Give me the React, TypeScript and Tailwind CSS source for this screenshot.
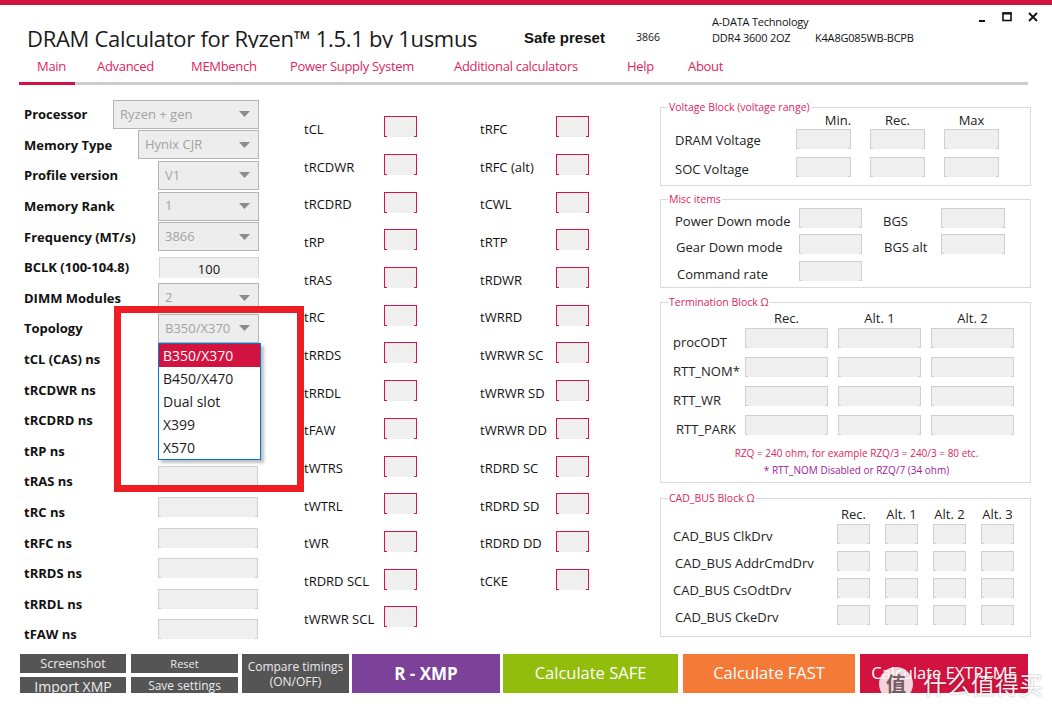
import React from "react";

// small WPF-style textbox: three sides drawn, bottom only has corner ticks
function Box({ className, red }: { className: string; red?: boolean }) {
  const line = red ? "border-[#d6144a]" : "border-[#cfcfcf]";
  const tick = red ? "bg-[#d6144a]" : "bg-[#cfcfcf]";
  return (
    <div className={`${className} ${line} flex shrink-0 flex-col border-x border-t bg-[#efefef]`}>
      <div className="flex-1" />
      <div className="flex h-px justify-between">
        <span className={`w-[2px] ${tick}`} />
        <span className={`w-[2px] ${tick}`} />
      </div>
    </div>
  );
}

function Combo({ className, value }: { className: string; value: string }) {
  return (
    <div
      className={`${className} flex h-[29px] shrink-0 items-center border border-[#b4b4b4] bg-[#ededed] pl-[6px] pr-[8px] text-[13px] text-[#a3a3a3]`}
    >
      <span className="flex-1">{value}</span>
      <svg width="11" height="6" viewBox="0 0 11 6" aria-hidden>
        <path d="M0 0h11L5.5 6z" fill="#8c8c8c" />
      </svg>
    </div>
  );
}

const leftRows: { label: string; kind: "combo" | "box" | "bclk"; value?: string; w?: string }[] = [
  { label: "Processor", kind: "combo", value: "Ryzen + gen", w: "w-[146px]" },
  { label: "Memory Type", kind: "combo", value: "Hynix CJR", w: "w-[121px]" },
  { label: "Profile version", kind: "combo", value: "V1", w: "w-[101px]" },
  { label: "Memory Rank", kind: "combo", value: "1", w: "w-[101px]" },
  { label: "Frequency (MT/s)", kind: "combo", value: "3866", w: "w-[101px]" },
  { label: "BCLK (100-104.8)", kind: "bclk" },
  { label: "DIMM Modules", kind: "combo", value: "2", w: "w-[101px]" },
  { label: "Topology", kind: "combo", value: "B350/X370", w: "w-[101px]" },
  { label: "tCL (CAS) ns", kind: "box" },
  { label: "tRCDWR ns", kind: "box" },
  { label: "tRCDRD ns", kind: "box" },
  { label: "tRP ns", kind: "box" },
  { label: "tRAS ns", kind: "box" },
  { label: "tRC ns", kind: "box" },
  { label: "tRFC ns", kind: "box" },
  { label: "tRRDS ns", kind: "box" },
  { label: "tRRDL ns", kind: "box" },
  { label: "tFAW ns", kind: "box" },
];

const timingsA = [
  "tCL", "tRCDWR", "tRCDRD", "tRP", "tRAS", "tRC", "tRRDS",
  "tRRDL", "tFAW", "tWTRS", "tWTRL", "tWR", "tRDRD SCL", "tWRWR SCL",
];
const timingsB = [
  "tRFC", "tRFC (alt)", "tCWL", "tRTP", "tRDWR", "tWRRD", "tWRWR SC",
  "tWRWR SD", "tWRWR DD", "tRDRD SC", "tRDRD SD", "tRDRD DD", "tCKE",
];

const tabs = [
  { name: "Main", w: "w-[60px]" },
  { name: "Advanced", w: "w-[94px]" },
  { name: "MEMbench", w: "w-[99px]" },
  { name: "Power Supply System", w: "w-[164px]" },
  { name: "Additional calculators", w: "w-[173px]" },
  { name: "Help", w: "w-[61px]" },
  { name: "About", w: "w-[60px]" },
];

function Legend({ children }: { children: React.ReactNode }) {
  return (
    <legend className="ml-[7px] px-[1px] text-[10.5px] leading-[14px] text-[#e0245e]">
      {children}
    </legend>
  );
}

export default function App() {
  return (
    <div className="relative h-[712px] w-[1052px] overflow-hidden bg-white font-['Open_Sans',sans-serif] text-[#111]">
      <div className="h-[5px] bg-[#d2123f]" />

      {/* title bar */}
      <div className="flex h-[52px]">
        <div className="w-[524px] shrink-0 pl-[27px]">
          <div className="mt-[17px] h-[26px] overflow-hidden whitespace-nowrap text-[22px] leading-[32px] tracking-[-0.3px] text-[#1a1a1a]">
            DRAM Calculator for Ryzen™ 1.5.1 by 1usmus
          </div>
        </div>
        <div className="w-[112px] shrink-0 pt-[24px] font-['Liberation_Sans',sans-serif] text-[15px] font-bold leading-[18px]">
          Safe preset
        </div>
        <div className="w-[76px] shrink-0 pt-[25px] text-[10.5px] leading-[14px]">3866</div>
        <div className="flex shrink-0 flex-col pt-[9px] text-[11px] leading-[16px] tracking-[-0.2px]">
          <div>A-DATA Technology</div>
          <div className="flex">
            <span className="w-[103px]">DDR4 3600 2OZ</span>
            <span>K4A8G085WB-BCPB</span>
          </div>
        </div>
        <div className="ml-auto flex items-start gap-[16px] pr-[14px] pt-[7px]">
          <svg width="7" height="10" viewBox="0 0 7 10" className="mt-[1px]" aria-hidden>
            <rect x="0" y="7" width="6" height="2" fill="#111" />
          </svg>
          <svg width="10" height="10" viewBox="0 0 10 10" aria-hidden>
            <rect x="1" y="1" width="8" height="7.5" fill="none" stroke="#111" strokeWidth="1.6" />
            <rect x="0.5" y="0.5" width="9" height="2" fill="#111" />
          </svg>
          <svg width="10" height="10" viewBox="0 0 10 10" aria-hidden>
            <path d="M1 1l8 8M9 1l-8 8" stroke="#111" strokeWidth="1.8" />
          </svg>
        </div>
      </div>

      {/* tabs */}
      <div className="flex h-[25px] pl-[37px] text-[13px] leading-[18px] tracking-[-0.3px] text-[#e0245e]">
        {tabs.map((t) => (
          <div key={t.name} className={`${t.w} shrink-0 whitespace-nowrap`}>
            {t.name}
          </div>
        ))}
      </div>
      <div className="ml-[19px] flex h-[3px] w-[1009px] bg-[#cccccc]">
        <div className="w-[56px] bg-[#d2123f]" />
      </div>

      {/* main area */}
      <div className="flex h-[569px]">
        {/* left column */}
        <div className="w-[300px] shrink-0 pl-[24px] pt-[14px]">
          <div className="flex w-[235px] flex-col">
            {leftRows.map((r) => (
              <div key={r.label} className="flex h-[30.6px] items-center justify-between">
                <span className="whitespace-nowrap text-[13px] font-bold leading-[18px]">{r.label}</span>
                {r.kind === "combo" && <Combo className={r.w!} value={r.value!} />}
                {r.kind === "bclk" && (
                  <div className="flex h-[21px] w-[100px] items-end justify-center border-x border-t border-[#d4d4d4] bg-[#efefef] text-[13px] leading-[18px]">
                    100
                  </div>
                )}
                {r.kind === "box" && <Box className="mb-[10px] mr-px h-[20px] w-[100px]" />}
              </div>
            ))}
          </div>
        </div>

        {/* timing columns */}
        <div className="flex w-[360px] shrink-0 pl-[4px] pt-[23px]">
          <div className="flex w-[176px] flex-col">
            {timingsA.map((t) => (
              <div key={t} className="flex h-[37.7px] items-center">
                <span className="w-[80px] whitespace-nowrap pt-[4px] text-[13px] leading-[18px]">{t}</span>
                <Box red className="h-[21px] w-[33px]" />
              </div>
            ))}
          </div>
          <div className="flex flex-col">
            {timingsB.map((t) => (
              <div key={t} className="flex h-[37.7px] items-center">
                <span className="w-[76px] whitespace-nowrap pt-[4px] text-[13px] leading-[18px]">{t}</span>
                <Box red className="h-[21px] w-[33px]" />
              </div>
            ))}
          </div>
        </div>

        {/* right blocks */}
        <div className="flex w-[371px] shrink-0 flex-col pt-[15px] text-[13px] leading-[18px] text-[#222]">
          <fieldset className="border border-[#dadada] pb-[8px]">
            <Legend>Voltage Block (voltage range)</Legend>
            <div className="pl-[14px]">
              <div className="-mt-[1px] flex h-[14px] items-center pl-[121px] leading-[14px]">
                <span className="w-[74px] pl-[10px] text-center">Min.</span>
                <span className="w-[74px] pr-[19px] text-center">Rec.</span>
                <span className="w-[74px] pr-[19px] text-center">Max</span>
              </div>
              <div className="mt-[2px] flex h-[20px] items-center">
                <span className="w-[121px] pt-[1px]">DRAM Voltage</span>
                <div className="flex gap-[19px]">
                  <Box className="h-[20px] w-[55px]" />
                  <Box className="h-[20px] w-[55px]" />
                  <Box className="h-[20px] w-[55px]" />
                </div>
              </div>
              <div className="mt-[8px] flex h-[20px] items-center">
                <span className="w-[121px] pt-[4px]">SOC Voltage</span>
                <div className="flex gap-[19px]">
                  <Box className="h-[20px] w-[55px]" />
                  <Box className="h-[20px] w-[55px]" />
                  <Box className="h-[20px] w-[55px]" />
                </div>
              </div>
            </div>
          </fieldset>

          <fieldset className="mt-[6px] border border-[#dadada] pb-[6px]">
            <Legend>Misc items</Legend>
            <div className="pl-[14px]">
              <div className="mt-[2px] flex h-[20px] items-center">
                <span className="w-[124px] pt-[6px]">Power Down mode</span>
                <Box className="h-[20px] w-[63px]" />
                <span className="ml-[21px] w-[58px] pt-[6px]">BGS</span>
                <Box className="h-[20px] w-[64px]" />
              </div>
              <div className="mt-[6px] flex h-[20px] items-center">
                <span className="w-[124px] pl-px pt-[6px]">Gear Down mode</span>
                <Box className="h-[20px] w-[63px]" />
                <span className="ml-[21px] w-[58px] pl-px pt-[6px]">BGS alt</span>
                <Box className="h-[20px] w-[64px]" />
              </div>
              <div className="mt-[7px] flex h-[20px] items-center">
                <span className="w-[124px] pl-[2px] pt-[5px]">Command rate</span>
                <Box className="h-[20px] w-[63px]" />
              </div>
            </div>
          </fieldset>

          <fieldset className="mt-[7px] border border-[#dadada] pb-[5px]">
            <Legend>Termination Block Ω</Legend>
            <div className="pl-[12px]">
              <div className="mt-[2px] flex h-[14px] items-center pl-[72px] leading-[14px]">
                <span className="w-[93px] pr-[10px] text-center">Rec.</span>
                <span className="w-[93px] pr-[10px] text-center">Alt. 1</span>
                <span className="w-[93px] pr-[10px] text-center">Alt. 2</span>
              </div>
              <div className="mt-[3px] flex flex-col gap-[9px]">
                {["procODT", "RTT_NOM*", "RTT_WR", "RTT_PARK"].map((l, i) => (
                  <div key={l} className="flex h-[20px] items-center">
                    <span className={`w-[72px] whitespace-nowrap pt-[7px] ${i === 3 ? "pl-[3px]" : ""}`}>{l}</span>
                    <div className="flex gap-[10px]">
                      <Box className="h-[20px] w-[83px]" />
                      <Box className="h-[20px] w-[83px]" />
                      <Box className="h-[20px] w-[83px]" />
                    </div>
                  </div>
                ))}
              </div>
              <div className="mt-[11px] h-[14px] pl-[10px] text-center text-[10px] leading-[14px] text-[#e0245e]">
                RZQ = 240 ohm, for example RZQ/3 = 240/3 = 80 etc.
              </div>
              <div className="mt-[3px] h-[14px] pl-[10px] text-center text-[10px] leading-[14px] text-[#a2189c]">
                * RTT_NOM Disabled or RZQ/7 (34 ohm)
              </div>
            </div>
          </fieldset>

          <fieldset className="mt-[8px] border border-[#dadada] pb-[11px]">
            <Legend>CAD_BUS Block Ω</Legend>
            <div className="pl-[12px]">
              <div className="mt-[2px] flex h-[14px] items-center pl-[164px] leading-[14px]">
                <span className="w-[48px] pr-[15px] text-center">Rec.</span>
                <span className="w-[48px] pr-[15px] text-center">Alt. 1</span>
                <span className="w-[48px] pr-[15px] text-center">Alt. 2</span>
                <span className="w-[48px] pr-[15px] text-center">Alt. 3</span>
              </div>
              <div className="mt-[3px] flex flex-col gap-[7px]">
                {["CAD_BUS ClkDrv", "CAD_BUS AddrCmdDrv", "CAD_BUS CsOdtDrv", "CAD_BUS CkeDrv"].map((l, i) => (
                  <div key={l} className="flex h-[20px] items-center">
                    <span className={`w-[164px] whitespace-nowrap pt-[4px] ${i % 2 === 1 ? "pl-[2px]" : ""}`}>{l}</span>
                    <div className="flex gap-[15px]">
                      <Box className="h-[20px] w-[33px]" />
                      <Box className="h-[20px] w-[33px]" />
                      <Box className="h-[20px] w-[33px]" />
                      <Box className="h-[20px] w-[33px]" />
                    </div>
                  </div>
                ))}
              </div>
            </div>
          </fieldset>
        </div>
      </div>

      {/* action buttons */}
      <div className="flex h-[39px] pl-[20px] text-white">
        <div className="flex w-[106px] flex-col gap-[4px]">
          <div className="flex h-[19px] items-center justify-center bg-[#555555] text-[12.5px] leading-[19px] text-[#ececec]">
            Screenshot
          </div>
          <div className="flex h-[16px] justify-center overflow-hidden bg-[#555555] text-[14px] leading-[19px] text-[#ececec]">
            Import XMP
          </div>
        </div>
        <div className="ml-[5px] flex w-[107px] flex-col gap-[4px]">
          <div className="flex h-[19px] items-center justify-center bg-[#555555] text-[11px] leading-[19px] text-[#ececec]">
            Reset
          </div>
          <div className="flex h-[16px] justify-center overflow-hidden bg-[#555555] text-[12px] leading-[18px] text-[#ececec]">
            Save settings
          </div>
        </div>
        <div className="ml-[4px] flex w-[107px] flex-col items-center justify-center bg-[#555555] text-[12px] leading-[15px] text-[#ececec]">
          <span>Compare timings</span>
          <span>(ON/OFF)</span>
        </div>
        <div className="ml-[3px] flex w-[148px] items-center justify-center bg-[#7c4199] text-[17px] font-bold">
          R - XMP
        </div>
        <div className="ml-[3px] flex w-[175px] items-center justify-center bg-[#92bd0c] text-[16.5px]">
          Calculate SAFE
        </div>
        <div className="ml-[5px] flex w-[172px] items-center justify-center bg-[#f47a38] text-[16.5px]">
          Calculate FAST
        </div>
        <div className="ml-[5px] flex w-[168px] items-center justify-center bg-[#d2123f] text-[16.5px]">
          Calculate EXTREME
        </div>
      </div>

      {/* open Topology list */}
      <div className="absolute left-[158px] top-[343px] flex h-[117px] w-[103px] flex-col border border-[#0078d7] bg-white text-[14px] leading-[23px] text-[#1a1a1a] shadow-[3px_3px_3px_rgba(0,0,0,0.25)]">
        <div className="bg-[#d2123f] pl-[4px] text-white">B350/X370</div>
        <div className="pl-[4px]">B450/X470</div>
        <div className="pl-[4px]">Dual slot</div>
        <div className="pl-[4px]">X399</div>
        <div className="pl-[4px]">X570</div>
      </div>

      {/* annotation frame */}
      <div className="absolute left-[114px] top-[306px] h-[186px] w-[190px] border-[7px] border-[#ee1d23]" />

      {/* watermark */}
      <div className="pointer-events-none absolute left-[879px] top-[667px] flex items-center gap-[10px] opacity-90">
        <div className="flex h-[34px] w-[34px] items-center justify-center rounded-full bg-white/90 font-['Noto_Sans_CJK_SC',sans-serif] text-[20px] font-bold text-[#666]">
          值
        </div>
        <div className="whitespace-nowrap font-['Noto_Sans_CJK_SC',sans-serif] text-[24px] leading-[30px] text-white [text-shadow:0_0_2px_rgba(0,0,0,0.45)]">
          什么值得买
        </div>
      </div>
    </div>
  );
}
